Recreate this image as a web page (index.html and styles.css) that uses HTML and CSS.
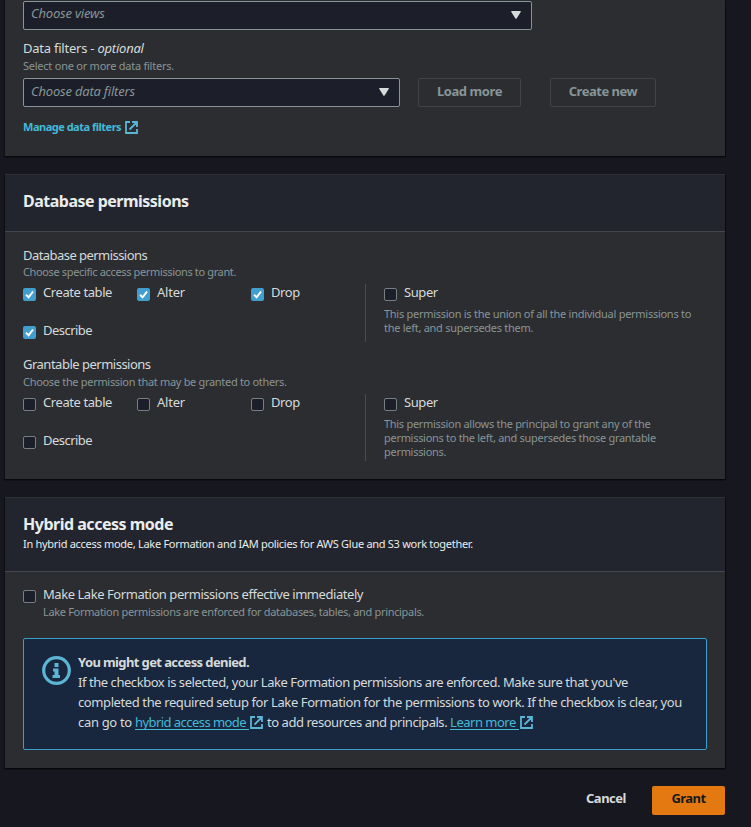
FILE: index.html
```html
<!DOCTYPE html>
<html lang="en">
<head>
<meta charset="utf-8">
<title>Grant permissions</title>
<link rel="stylesheet" href="styles.css">
</head>
<body>
<svg class="defs" aria-hidden="true">
  <symbol id="external" viewBox="0 0 13 13"><path d="M5 1H1v11h11V8M7 1h5v5M11.500 1.500 4.500 8.500" fill="none" stroke="currentColor" stroke-width="1.800"/></symbol>
  <symbol id="caret" viewBox="0 0 10 8"><path d="M.5 0h9Q10 .3 9.7 1L5.600 7.600Q5 8.300 4.400 7.600L.3 1Q0 .3.5 0Z" fill="currentColor"/></symbol>
</svg>
<main class="page">
  <section class="card">
    <div class="filters">
      <div class="select select-wide"><span class="t-views">Choose views</span><svg class="caret"><use href="#caret"/></svg></div>
      <div class="label t-filters">Data filters - <i>optional</i></div>
      <div class="hint t-select">Select one or more data filters.</div>
      <div class="controls">
        <div class="select"><span class="t-views">Choose data filters</span><svg class="caret"><use href="#caret"/></svg></div>
        <button class="button disabled load" disabled>Load more</button>
        <button class="button disabled create" disabled>Create new</button>
      </div>
      <a class="manage"><span>Manage data filters</span><svg class="ext"><use href="#external"/></svg></a>
    </div>
  </section>

  <section class="card">
    <header class="head"><h2>Database permissions</h2></header>
    <div class="body">
      <div class="label t-database">Database permissions</div>
      <div class="hint short t-specific">Choose specific access permissions to grant.</div>
      <div class="perms first">
        <div class="options">
          <label class="option"><span class="box checked"><svg viewBox="0 0 13 13"><path d="m3 6.800 2.600 2.500L10 3.500"/></svg></span>Create table</label>
          <label class="option"><span class="box checked"><svg viewBox="0 0 13 13"><path d="m3 6.800 2.600 2.500L10 3.500"/></svg></span><span class="t-alter">Alter</span></label>
          <label class="option"><span class="box checked"><svg viewBox="0 0 13 13"><path d="m3 6.800 2.600 2.500L10 3.500"/></svg></span>Drop</label>
          <label class="option"><span class="box checked"><svg viewBox="0 0 13 13"><path d="m3 6.800 2.600 2.500L10 3.500"/></svg></span><span class="t-describe">Describe</span></label>
        </div>
        <div class="super">
          <label class="option"><span class="box"></span>Super</label>
          <p>This permission is the union of all the individual permissions to<br>the left, and supersedes them.</p>
        </div>
      </div>
      <div class="label t-grantable">Grantable permissions</div>
      <div class="hint short lower t-others">Choose the permission that may be granted to others.</div>
      <div class="perms second">
        <div class="options">
          <label class="option"><span class="box"></span>Create table</label>
          <label class="option"><span class="box"></span><span class="t-alter">Alter</span></label>
          <label class="option"><span class="box"></span>Drop</label>
          <label class="option"><span class="box"></span><span class="t-describe">Describe</span></label>
        </div>
        <div class="super">
          <label class="option"><span class="box"></span>Super</label>
          <p class="t-principal">This permission allows the principal to grant any of the<br>permissions to the left, and supersedes those grantable<br>permissions.</p>
        </div>
      </div>
    </div>
  </section>

  <section class="card">
    <header class="head tall"><h2>Hybrid access mode</h2><p>In hybrid access mode, Lake Formation and IAM policies for AWS Glue and S3 work together.</p></header>
    <div class="body hybrid">
      <label class="option"><span class="box"></span><span class="t-make">Make Lake Formation permissions effective immediately</span></label>
      <div class="hint indent">Lake Formation permissions are enforced for databases, tables, and principals.</div>
      <div class="alert">
        <svg class="info" viewBox="0 0 29 29"><circle cx="14.500" cy="14.500" r="12.800" fill="none" stroke="currentColor" stroke-width="3.200"/><path d="M12.500 7h4v4h-4zM11 12.500h5.500v6.500H18v3h-7.500v-3h2v-3.500H11z" fill="currentColor"/></svg>
        <div class="message">
          <b>You might get access denied.</b>
          <div class="t-selected">If the checkbox is selected, your Lake Formation permissions are enforced. Make sure that you've</div>
          <div>completed the required setup for Lake Formation for the permissions to work. If the checkbox is clear, you</div>
          <div class="links"><span class="t-go">can go to </span><a>hybrid access mode</a><svg class="ext"><use href="#external"/></svg><span class="t-add"> to add resources and principals. </span><a class="learn">Learn more</a><svg class="ext"><use href="#external"/></svg></div>
        </div>
      </div>
    </div>
  </section>

  <footer class="actions">
    <button class="button cancel">Cancel</button>
    <button class="button grant">Grant</button>
  </footer>
</main>
</body>
</html>
```
FILE: styles.css
```css
* { box-sizing: border-box; }
body {
  margin: 0;
  height: 827px;
  overflow: hidden;
  background: #17171f;
  color: #d5dbdb;
  font: 13px/18px "Noto Sans", sans-serif;
  letter-spacing: -0.42px;
}
h2, p { margin: 0; }
.defs { position: absolute; width: 0; height: 0; }
.page { width: 720px; margin-left: 5px; display: flex; flex-direction: column; gap: 18px; }
.card { background: #2c2d31; box-shadow: 0 1px 1px #08080c, 1px 1px 1px #0c0c11, -1px 1px 1px #101015; }

.filters { height: 156px; padding: 1px 18px 0; }
.label { height: 18px; line-height: 16px; }
.select {
  width: 377px;
  height: 29px;
  padding: 0 10px 3px 7px;
  display: flex;
  align-items: center;
  justify-content: space-between;
  border: 1px solid #879596;
  border-radius: 2px;
  background: #1c1e29;
  color: #879596;
  font-style: italic;
}
.select-wide { width: 509px; padding-bottom: 5px; }
.caret { width: 10px; height: 8px; margin-top: 2px; color: #d5dbdb; }
.select-wide .caret { margin-top: 4px; }
.t-views { letter-spacing: -0.2px; }
.t-filters { margin-top: 10px; letter-spacing: -0.23px; }
.hint { color: #879596; font-size: 11px; line-height: 16px; }
.t-select { letter-spacing: -0.24px; }
.controls { display: flex; margin-top: 4px; }
.button {
  height: 29px;
  padding: 0 0 3px;
  border: 1px solid transparent;
  border-radius: 2px;
  background: none;
  color: #d5dbdb;
  font: 700 13px/18px "Noto Sans", sans-serif;
  letter-spacing: -0.48px;
}
.disabled { border-color: #424349; color: #879596; }
.load { width: 103px; margin-left: 18px; letter-spacing: -0.43px; }
.create { width: 106px; margin-left: 29px; }
.manage {
  display: flex;
  height: 16px;
  margin-top: 12px;
  color: #44b9d6;
  font-size: 11px;
  font-weight: 700;
  line-height: 16px;
  letter-spacing: -0.49px;
}
.ext { flex: none; width: 13px; height: 13px; color: #5bb5d5; }
.manage .ext { margin: 2px 0 0 4px; }

.head { height: 58px; padding: 16px 18px 0; border-top: 1px solid #2f3035; border-bottom: 1px solid #45464b; background: #22252d; }
.head h2 { height: 22px; color: #eaeded; font-size: 16px; line-height: 20px; letter-spacing: -0.51px; }
.tall { height: 75px; }
.tall h2 { letter-spacing: -0.49px; }
.head p { color: #eaeded; font-size: 11px; line-height: 16px; letter-spacing: -0.288px; }
.body { height: 247px; padding: 15px 18px 0; }
.short { line-height: 14px; }
.lower { margin-top: 1px; }
.t-database { letter-spacing: -0.55px; }
.t-specific { letter-spacing: -0.36px; }
.t-grantable { letter-spacing: -0.5px; }
.t-others { letter-spacing: -0.31px; }
.perms { display: grid; grid-template-columns: 342px 342px; }
.first { height: 58px; margin: 5px 0 14px; }
.second { height: 67px; margin-top: 5px; }
.options { display: grid; grid-template-columns: repeat(3, 114px); grid-auto-rows: 18px; row-gap: 20px; }
.option { display: flex; gap: 7px; height: 18px; line-height: 16px; }
.box { flex: none; width: 13px; height: 13px; margin-top: 4px; border: 1px solid #758081; border-radius: 2px; background: #1c1e29; }
.checked { border: 0; background: #409fce; }
.box svg { display: block; width: 13px; height: 13px; fill: none; stroke: #fff; stroke-width: 2; }
.t-alter { letter-spacing: -0.21px; }
.t-describe { letter-spacing: -0.54px; }
.super { padding-left: 18px; border-left: 1px solid #4a4c52; }
.super p { margin-top: 5px; color: #879596; font-size: 11px; line-height: 14px; letter-spacing: -0.275px; white-space: nowrap; }
.super .t-principal { letter-spacing: -0.295px; }

.hybrid { height: 196px; padding-top: 14px; }
.t-make { letter-spacing: -0.446px; }
.indent { padding-left: 20px; letter-spacing: -0.327px; }
.alert { display: flex; height: 112px; margin-top: 18px; padding: 13px 18px 0; border: 1px solid #3a9dcb; border-radius: 2px; background: #19273e; }
.info { flex: none; width: 29px; height: 29px; margin: 4px 7px 0 0; color: #5bb5d5; }
.message { line-height: 20px; letter-spacing: -0.398px; white-space: nowrap; }
.message b { display: block; letter-spacing: -0.61px; }
.message .t-selected { letter-spacing: -0.445px; }
.links { display: flex; white-space: pre; }
.links .t-go { letter-spacing: -0.32px; }
.links .t-add { letter-spacing: -0.46px; margin-left: 1px; }
.links a { height: 18px; padding-right: 3px; border-bottom: 1px solid #44b9d6; color: #44b9d6; letter-spacing: -0.55px; }
.links .learn { letter-spacing: -0.5px; }
.links .ext { margin: 4px 0 0 1px; }

.actions { display: flex; justify-content: flex-end; }
.actions .button { padding-bottom: 5px; }
.cancel { width: 78px; margin-right: 7px; }
.grant { width: 73px; background: #e47911; color: #16191f; letter-spacing: -0.55px; }
```
